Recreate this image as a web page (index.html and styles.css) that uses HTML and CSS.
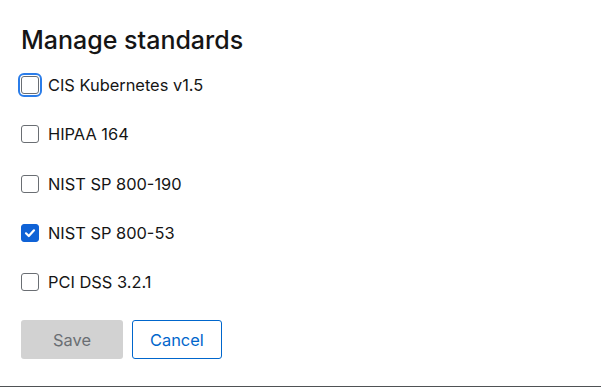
FILE: index.html
```html
<!DOCTYPE html>
<html>
<head>
<meta charset="utf-8">
<link rel="stylesheet" href="styles.css">
</head>
<body>
<div class="panel">
  <h1 class="title">Manage standards</h1>
  <div class="list">
    <label class="row"><span class="box focus"></span><span class="label">CIS Kubernetes v1.5</span></label>
    <label class="row"><span class="box"></span><span class="label">HIPAA 164</span></label>
    <label class="row"><span class="box"></span><span class="label">NIST SP 800-190</span></label>
    <label class="row"><span class="box checked"><svg viewBox="0 0 18 18" width="18" height="18"><path d="M5 9.3 L7.8 12 L13 6.3" fill="none" stroke="#fff" stroke-width="2.2" stroke-linecap="round" stroke-linejoin="round"/></svg></span><span class="label">NIST SP 800-53</span></label>
    <label class="row"><span class="box"></span><span class="label">PCI DSS 3.2.1</span></label>
  </div>
  <div class="actions">
    <button class="btn btn-save">Save</button>
    <button class="btn btn-cancel">Cancel</button>
  </div>
</div>
<div class="footer-line"></div>
</body>
</html>
```

FILE: styles.css
```css
html, body {
  margin: 0;
  padding: 0;
  background: #fff;
  width: 601px;
  height: 387px;
  overflow: hidden;
}
body {
  font-family: Inter, "Open Sans", sans-serif;
  color: #151515;
  display: flex;
  flex-direction: column;
}
.panel {
  flex: 1;
  padding: 24px 0 0 21px;
  display: flex;
  flex-direction: column;
}
.title {
  margin: 0;
  font-size: 25px;
  font-weight: 500;
  line-height: 32px;
  letter-spacing: 0;
}
.list {
  margin-top: 17px;
  display: flex;
  flex-direction: column;
  gap: 25.25px;
}
.row {
  display: flex;
  align-items: center;
  height: 24px;
  gap: 9px;
}
.box {
  width: 18px;
  height: 18px;
  box-sizing: border-box;
  border: 1px solid #6a6e73;
  border-radius: 3px;
  display: flex;
  align-items: center;
  justify-content: center;
  flex: none;
}
.box.focus {
  outline: 2.5px solid #2b7de9;
  outline-offset: 1.5px;
  border-radius: 3px;
}
.box.checked {
  background: #0f62d6;
  border-color: #0f62d6;
}
.box svg { display: block; flex: none; margin: -1px; }
.label {
  font-size: 16.4px;
  line-height: 24px;
}
.actions {
  margin-top: 26px;
  display: flex;
  gap: 9px;
}
.btn {
  height: 39px;
  box-sizing: border-box;
  border-radius: 3px;
  font-family: inherit;
  font-size: 16.4px;
  padding: 0 17px;
  border: 1px solid transparent;
}
.btn-save {
  min-width: 102px;
  background: #d2d2d2;
  color: #6a6e73;
}
.btn-cancel {
  background: #fff;
  border-color: #0066cc;
  color: #0066cc;
}
.footer-line {
  height: 1px;
  background: #4f5255;
  flex: none;
}
```
